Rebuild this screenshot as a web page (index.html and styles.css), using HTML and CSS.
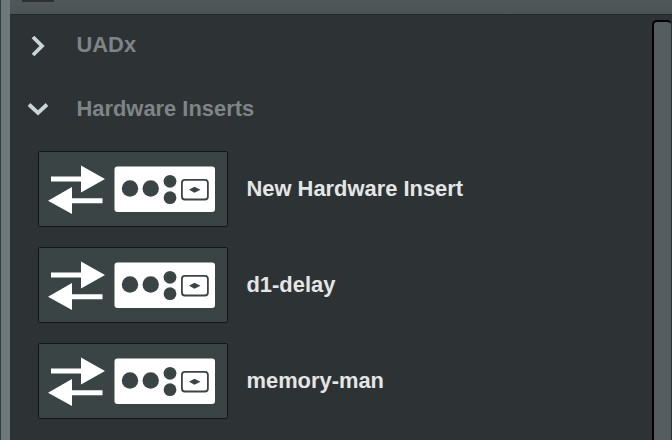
FILE: index.html
```html
<!DOCTYPE html>
<html lang="en">
<head>
<meta charset="UTF-8" />
<meta name="viewport" content="width=device-width, initial-scale=1" />
<title>Browser</title>
<link rel="stylesheet" href="styles.css">
</head>
<body>
<svg class="defs" width="0" height="0">
  <symbol id="insert-icon" viewBox="0 0 190 76">
    <path d="M13 25.5H43V14.5L67 28L43 41.5V30.5H13Z" fill="#fff" />
    <path d="M64.5 47.3H34V36L10 49.7L34 63V52.3H64.5Z" fill="#fff" />
    <rect x="76.5" y="15.5" width="100.5" height="45.5" rx="3" fill="#fff" />
    <circle cx="92" cy="37.5" r="8.2" fill="#3a4445" />
    <circle cx="112.7" cy="37.5" r="8.2" fill="#3a4445" />
    <circle cx="132" cy="30.3" r="6.4" fill="#3a4445" />
    <circle cx="132" cy="46.7" r="6.4" fill="#3a4445" />
    <rect x="143.9" y="28.9" width="26" height="19.6" rx="3" fill="none" stroke="#3a4445" stroke-width="1.8" />
    <path d="M151 38.7L156.5 35.7L162.5 38.7L156.5 41.7Z" fill="#3a4445" />
  </symbol>
</svg>

<div class="strip"></div>
<div class="panel">
  <div class="toolbar"><div class="tab"></div></div>
  <div class="content">
    <div class="list">
      <div class="group">
        <svg class="chevron chevron-right" viewBox="0 0 14 22"><path d="M2 2L11 11L2 20" /></svg>
        <span class="group-name">UADx</span>
      </div>
      <div class="group">
        <svg class="chevron chevron-down" viewBox="0 0 22 14"><path d="M2 2.5L11 11L20 2.5" /></svg>
        <span class="group-name">Hardware Inserts</span>
      </div>
      <div class="items">
        <div class="item">
          <div class="thumb"><svg width="190" height="76"><use href="#insert-icon" /></svg></div>
          <span class="item-name">New Hardware Insert</span>
        </div>
        <div class="item">
          <div class="thumb"><svg width="190" height="76"><use href="#insert-icon" /></svg></div>
          <span class="item-name">d1-delay</span>
        </div>
        <div class="item">
          <div class="thumb"><svg width="190" height="76"><use href="#insert-icon" /></svg></div>
          <span class="item-name">memory-man</span>
        </div>
      </div>
    </div>
    <div class="scrollbar"><div class="thumb-bar"></div></div>
  </div>
</div>
</body>
</html>
```

FILE: styles.css
```css
* {
  margin: 0; padding: 0; box-sizing: border-box;
}
html, body {
  height: 100%;
}
body {
  display: flex;
  overflow: hidden;
  background: #2d3234;
  font-family: 'Liberation Sans', Arial, sans-serif;
  font-weight: 700;
}
.defs {
  position: absolute;
}
.strip {
  width: 10px;
  flex: none;
  background: #6e797b;
  border-left: 1px solid #343a3c;
}
.panel {
  flex: 1;
  display: flex;
  flex-direction: column;
  min-width: 0;
}
.toolbar {
  height: 15px;
  flex: none;
  padding-left: 12px;
  background: linear-gradient(to bottom, #50585a, #4c5355);
  border-bottom: 1px solid #242829;
}
.tab {
  width: 32px;
  height: 2px;
  background: #2d3133;
}
.content {
  flex: 1;
  display: flex;
  min-height: 0;
}
.list {
  flex: 1;
  padding-left: 28px;
}
.group {
  height: 64px;
  padding-bottom: 4px;
  display: flex;
  align-items: center;
}
.chevron {
  flex: none;
  fill: none;
  stroke: #c8d6da;
  stroke-width: 3.8;
}
.chevron-right {
  width: 14px;
  height: 22px;
  margin-top: 2px;
  margin-left: -7px;
  margin-right: 31.5px;
}
.chevron-down {
  width: 22px;
  height: 14px;
  margin-left: -11px;
  margin-right: 27.5px;
}
.group-name {
  font-size: 21.9px;
  color: #7f8486;
}
.items {
  display: flex;
  flex-direction: column;
  gap: 20px;
  margin-top: 8px;
}
.item {
  display: flex;
  align-items: center;
  gap: 18.5px;
}
.thumb {
  width: 190px;
  height: 76px;
  flex: none;
  background: #3a4445;
  outline: 1px solid #121415;
  outline-offset: -1px;
  border-radius: 2px;
}
.thumb svg {
  display: block;
}
.item-name {
  font-size: 21.9px;
  color: #e4e6e6;
}
.scrollbar {
  width: 20px;
  flex: none;
  padding-top: 5px;
}
.thumb-bar {
  height: 100%;
  background: #565d60;
  border: 2px solid #000;
  border-right: 1px solid #2d3234;
  border-bottom: none;
  border-radius: 5px 5px 0 0;
}
```
